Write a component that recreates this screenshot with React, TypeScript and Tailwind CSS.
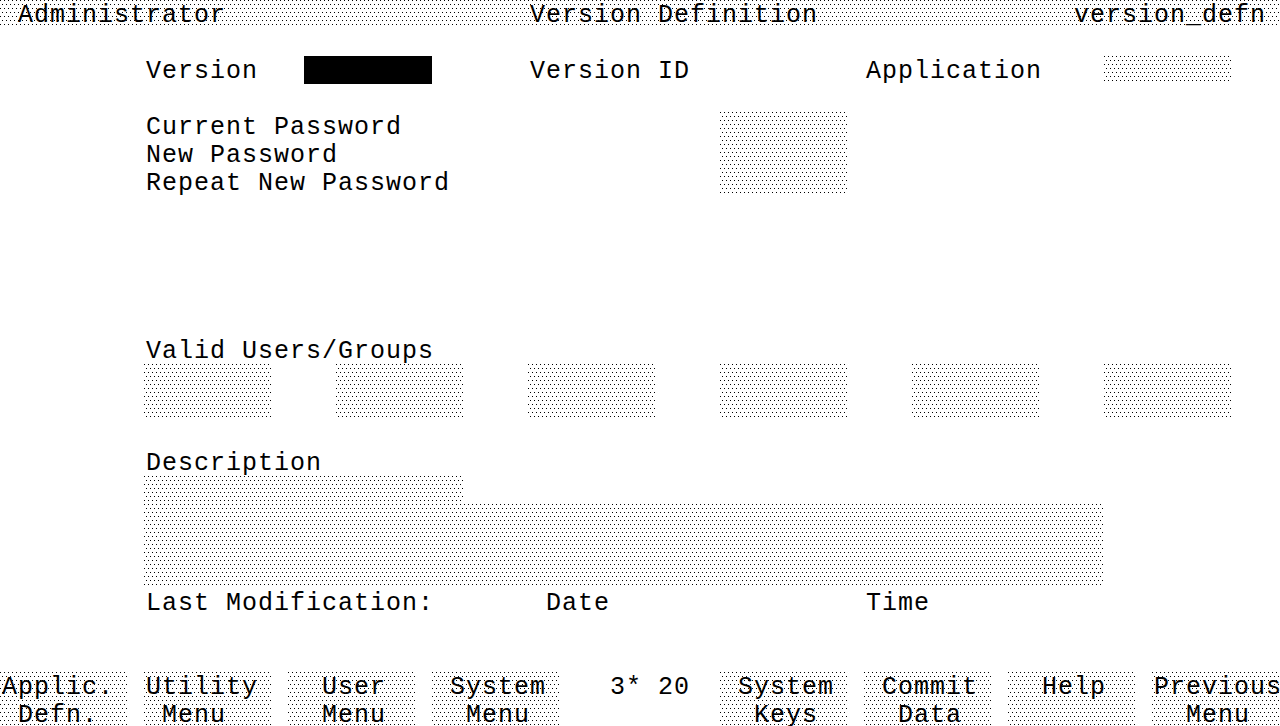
const D =
  "bg-[image:conic-gradient(at_1px_1px,transparent_75%,#000_0),conic-gradient(at_1px_1px,transparent_75%,#000_0)] bg-size-[4px_8px] bg-position-[0_0,2px_4px]";

const T = "whitespace-pre pl-[2px] pt-[2px]";

export default function App() {
  return (
    <div className="w-[1280px] h-[726px] overflow-hidden bg-white text-black font-['Liberation_Mono',monospace] text-[25px] leading-[28px] tracking-[1px] grid grid-cols-[repeat(80,16px)] grid-rows-[repeat(26,28px)]">
      {/* header */}
      <div className={`row-start-1 col-start-1 col-span-full ${D}`} />
      <div className={`row-start-1 col-start-2 col-span-13 ${T}`}>Administrator</div>
      <div className={`row-start-1 col-start-34 col-span-18 ${T}`}>Version Definition</div>
      <div className={`row-start-1 col-start-68 col-span-12 ${T}`}>version_defn</div>

      {/* version row */}
      <div className={`row-start-3 col-start-10 col-span-7 ${T}`}>Version</div>
      <div className="row-start-3 col-start-20 col-span-8 bg-black" />
      <div className={`row-start-3 col-start-34 col-span-10 ${T}`}>Version ID</div>
      <div className={`row-start-3 col-start-55 col-span-11 ${T}`}>Application</div>
      <div className={`row-start-3 col-start-70 col-span-8 ${D}`} />

      {/* passwords */}
      <div className={`row-start-5 col-start-10 col-span-16 ${T}`}>Current Password</div>
      <div className={`row-start-6 col-start-10 col-span-12 ${T}`}>New Password</div>
      <div className={`row-start-7 col-start-10 col-span-19 ${T}`}>Repeat New Password</div>
      <div className={`row-start-5 row-span-3 col-start-46 col-span-8 ${D}`} />

      {/* valid users */}
      <div className={`row-start-13 col-start-10 col-span-18 ${T}`}>Valid Users/Groups</div>
      <div className={`row-start-14 row-span-2 col-start-10 col-span-8 ${D}`} />
      <div className={`row-start-14 row-span-2 col-start-22 col-span-8 ${D}`} />
      <div className={`row-start-14 row-span-2 col-start-34 col-span-8 ${D}`} />
      <div className={`row-start-14 row-span-2 col-start-46 col-span-8 ${D}`} />
      <div className={`row-start-14 row-span-2 col-start-58 col-span-8 ${D}`} />
      <div className={`row-start-14 row-span-2 col-start-70 col-span-8 ${D}`} />

      {/* description */}
      <div className={`row-start-17 col-start-10 col-span-11 ${T}`}>Description</div>
      <div className={`row-start-18 col-start-10 col-span-20 ${D}`} />
      <div className={`row-start-19 row-span-3 col-start-10 col-span-60 ${D}`} />

      {/* last modification */}
      <div className={`row-start-22 col-start-10 col-span-18 ${T}`}>Last Modification:</div>
      <div className={`row-start-22 col-start-35 col-span-4 ${T}`}>Date</div>
      <div className={`row-start-22 col-start-55 col-span-4 ${T}`}>Time</div>

      {/* function keys */}
      <div className={`row-start-25 row-span-2 col-start-1 col-span-8 ${D} ${T}`}>{"Applic.\n Defn."}</div>
      <div className={`row-start-25 row-span-2 col-start-10 col-span-8 ${D} ${T}`}>{"Utility\n Menu"}</div>
      <div className={`row-start-25 row-span-2 col-start-19 col-span-8 ${D} ${T}`}>{"  User\n  Menu"}</div>
      <div className={`row-start-25 row-span-2 col-start-28 col-span-8 ${D} ${T}`}>{" System\n  Menu"}</div>
      <div className={`row-start-25 col-start-39 col-span-5 ${T}`}>3* 20</div>
      <div className={`row-start-25 row-span-2 col-start-46 col-span-8 ${D} ${T}`}>{" System\n  Keys"}</div>
      <div className={`row-start-25 row-span-2 col-start-55 col-span-8 ${D} ${T}`}>{" Commit\n  Data"}</div>
      <div className={`row-start-25 row-span-2 col-start-64 col-span-8 ${D} ${T}`}>{"  Help"}</div>
      <div className={`row-start-25 row-span-2 col-start-73 col-span-8 ${D} ${T}`}>{"Previous\n  Menu"}</div>
    </div>
  );
}
